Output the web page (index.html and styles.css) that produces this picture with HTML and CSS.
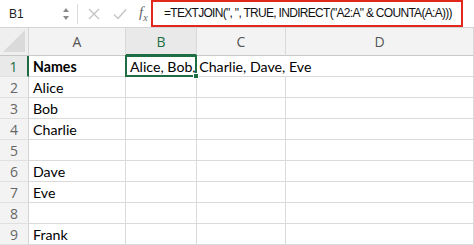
FILE: index.html
```html
<!DOCTYPE html>
<html lang="en">
<head>
  <meta charset="UTF-8">
  <title>TEXTJOIN - Sheet</title>
  <link rel="stylesheet" href="styles.css">
</head>
<body>

  <!-- Formula bar -->
  <div class="formula-bar">
    <div class="name-box">B1</div>
    <div class="spinner">
      <svg width="8" height="14" viewBox="0 0 8 14"><path d="M1 5 L4 1 L7 5 Z M1 9 L4 13 L7 9 Z" fill="#8a8a8a"/></svg>
    </div>
    <div class="bar-sep"></div>
    <div class="bar-icons">
      <svg width="14" height="14" viewBox="0 0 14 14"><path d="M2 2 L12 12 M12 2 L2 12" stroke="#c4c4c4" stroke-width="1.4" fill="none"/></svg>
      <svg width="16" height="14" viewBox="0 0 16 14"><path d="M2 7.5 L6 11.5 L14 2.5" stroke="#c4c4c4" stroke-width="1.4" fill="none"/></svg>
      <span class="fx">f<sub>x</sub></span>
    </div>
    <div class="formula-input">=TEXTJOIN(", ", TRUE, INDIRECT("A2:A" &amp; COUNTA(A:A)))</div>
  </div>

  <!-- Sheet -->
  <div class="sheet">
    <div class="corner"><div class="corner-tri"></div></div>
    <div class="col-head">A</div>
    <div class="col-head active">B</div>
    <div class="col-head">C</div>
    <div class="col-head">D</div>

    <div class="row-head active">1</div>
    <div class="cell bold">Names</div>
    <div class="cell selected"><span class="overflow">Alice, Bob, Charlie, Dave, Eve</span><span class="handle"></span></div>
    <div class="cell spill"></div>
    <div class="cell"></div>

    <div class="row-head">2</div><div class="cell">Alice</div><div class="cell"></div><div class="cell"></div><div class="cell"></div>
    <div class="row-head">3</div><div class="cell">Bob</div><div class="cell"></div><div class="cell"></div><div class="cell"></div>
    <div class="row-head">4</div><div class="cell">Charlie</div><div class="cell"></div><div class="cell"></div><div class="cell"></div>
    <div class="row-head">5</div><div class="cell"></div><div class="cell"></div><div class="cell"></div><div class="cell"></div>
    <div class="row-head">6</div><div class="cell">Dave</div><div class="cell"></div><div class="cell"></div><div class="cell"></div>
    <div class="row-head">7</div><div class="cell">Eve</div><div class="cell"></div><div class="cell"></div><div class="cell"></div>
    <div class="row-head">8</div><div class="cell"></div><div class="cell"></div><div class="cell"></div><div class="cell"></div>
    <div class="row-head">9</div><div class="cell">Frank</div><div class="cell"></div><div class="cell"></div><div class="cell"></div>
  </div>

</body>
</html>
```

FILE: styles.css
```css
/* General */
* {
  margin: 0;
  padding: 0;
  box-sizing: border-box;
}

body {
  width: 474px;
  height: 245px;
  overflow: hidden;
  background: #fff;
  font-family: Lato, "Open Sans", sans-serif;
  color: #000;
}

/* Formula bar */
.formula-bar {
  display: flex;
  align-items: center;
  height: 28px;
  border-bottom: 1px solid #d4d4d4;
  background: #fff;
}

.name-box {
  width: 62px;
  flex-shrink: 0;
  padding-left: 9px;
  font-family: "Liberation Sans", sans-serif;
  font-size: 12px;
  color: #222;
}

.spinner {
  width: 15px;
  flex-shrink: 0;
  display: flex;
  align-items: center;
}

.bar-sep {
  width: 1px;
  height: 20px;
  flex-shrink: 0;
  background: #dcdcdc;
}

.bar-icons {
  display: flex;
  align-items: center;
  gap: 11px;
  padding-left: 9px;
  width: 73px;
  flex-shrink: 0;
}

.fx {
  font-family: "Liberation Serif", serif;
  font-style: italic;
  font-size: 15px;
  color: #666;
}

.fx sub {
  font-size: 10px;
}

.formula-input {
  width: 312px;
  min-width: 0;
  flex-shrink: 0;
  height: 27px;
  margin-top: -1px;
  border: 2.5px solid #e2281d;
  padding-left: 11px;
  display: flex;
  align-items: center;
  overflow: hidden;
  font-family: "Liberation Sans", sans-serif;
  font-size: 12px;
  letter-spacing: -0.7px;
  color: #111;
  white-space: nowrap;
}

/* Sheet grid */
.sheet {
  display: grid;
  grid-template-columns: 29px 97px 71px 89px 188px;
  grid-template-rows: 28px repeat(9, 21px);
}

.corner {
  background: #efefef;
  border-right: 1px solid #d4d4d4;
  border-bottom: 1px solid #c8c8c8;
  position: relative;
}

.corner-tri {
  position: absolute;
  right: 3px;
  bottom: 3px;
  width: 0;
  height: 0;
  border-left: 22px solid transparent;
  border-bottom: 22px solid #dadada;
}

.col-head {
  background: #f3f3f3;
  border-right: 1px solid #d9d9d9;
  border-bottom: 1px solid #c8c8c8;
  display: flex;
  align-items: center;
  justify-content: center;
  font-family: "Open Sans", sans-serif;
  font-size: 14px;
  color: #555;
}

.col-head.active {
  color: #1f6e43;
  background: #e9e9e9;
  border-bottom: 2px solid #1f6e43;
}

.row-head {
  background: #f3f3f3;
  border-right: 1px solid #d4d4d4;
  border-bottom: 1px solid #e0e0e0;
  display: flex;
  align-items: center;
  justify-content: center;
  font-family: "Open Sans", sans-serif;
  font-size: 14px;
  color: #666;
}

.row-head.active {
  color: #1f6e43;
  background: #e9e9e9;
  border-right: 2px solid #1f6e43;
}

.cell {
  border-right: 1px solid #dadada;
  border-bottom: 1px solid #dadada;
  display: flex;
  align-items: center;
  padding-left: 4px;
  font-size: 14.2px;
  white-space: nowrap;
}

.cell.bold {
  font-weight: bold;
}

.cell.spill {
  border-right: none;
}

.cell.selected {
  position: relative;
  border: 2px solid #1f6e43;
  margin: -1px 0 0 -1px;
  padding-left: 3px;
  overflow: visible;
  z-index: 1;
}

.overflow {
  position: relative;
}

.handle {
  position: absolute;
  right: -4px;
  bottom: -4px;
  width: 6px;
  height: 6px;
  background: #1f6e43;
  border: 1px solid #fff;
}
```
